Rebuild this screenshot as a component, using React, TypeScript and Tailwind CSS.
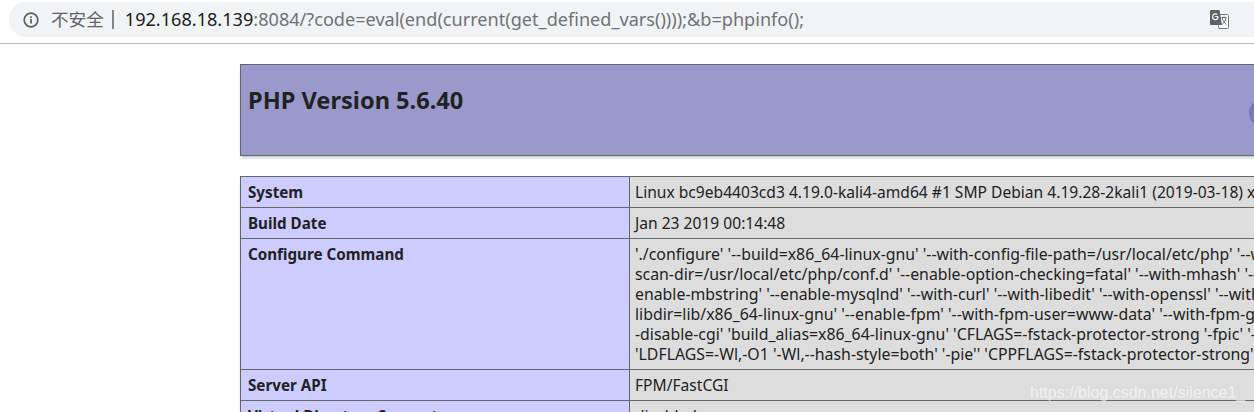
const font = "font-['Noto_Sans','Open_Sans',sans-serif]";

function Info() {
  return (
    <svg width="16" height="16" viewBox="0 0 16 16" fill="none" className="shrink-0">
      <circle cx="8" cy="8" r="6.8" stroke="#5f6368" strokeWidth="1.7" />
      <rect x="7.1" y="7.1" width="1.8" height="4.4" fill="#5f6368" />
      <rect x="7.1" y="4.300" width="1.8" height="1.8" fill="#5f6368" />
    </svg>
  );
}

function Translate() {
  return (
    <svg width="19" height="19" viewBox="0 0 19 19" className="shrink-0">
      <path d="M7 4.500h10.500a1 1 0 0 1 1 1v12a1 1 0 0 1-1 1H9l-2-14z" fill="#fff" stroke="#777" strokeWidth="1" />
      <path d="M1 0h8.500l2.500 15H1a1 1 0 0 1-1-1V1a1 1 0 0 1 1-1z" fill="#5f6368" />
      <path d="M8 6.500H5.200M8 6.500c0 2-1 3.200-2.600 3.200S2.600 8.500 2.600 6.800 3.800 3.800 5.400 3.800c.8 0 1.300.3 1.700.7" fill="none" stroke="#fff" strokeWidth="1.200" />
      <path d="M11.500 7.500h5M14 6.500v1M12.200 8c.5 2.500 2.300 5 4.300 6.500M16 8c-.5 2.500-2 5-4 6.500" fill="none" stroke="#666" strokeWidth="1" />
    </svg>
  );
}

function Row({ label, h, children }: { label: string; h: string; children: React.ReactNode }) {
  return (
    <tr className={h}>
      <td className="border border-[#666] bg-[#ccccff] px-[7px] py-[5px] align-top text-[15.2px] leading-5 font-bold text-[#222]">{label}</td>
      <td className="border border-[#666] bg-[#dddddd] px-[5px] py-[5px] align-top text-[15.6px] leading-5 whitespace-nowrap text-[#222]">{children}</td>
    </tr>
  );
}

const lines = [
  "'./configure' '--build=x86_64-linux-gnu' '--with-config-file-path=/usr/local/etc/php' '--with-config-file-",
  "scan-dir=/usr/local/etc/php/conf.d' '--enable-option-checking=fatal' '--with-mhash' '--enable-ftp' '--",
  "enable-mbstring' '--enable-mysqlnd' '--with-curl' '--with-libedit' '--with-openssl' '--with-zlib' '--with-",
  "libdir=lib/x86_64-linux-gnu' '--enable-fpm' '--with-fpm-user=www-data' '--with-fpm-group=www-data' '--",
  "-disable-cgi' 'build_alias=x86_64-linux-gnu' 'CFLAGS=-fstack-protector-strong '-fpic' '-fpie' '-O2'",
  "'LDFLAGS=-Wl,-O1 '-Wl,--hash-style=both' '-pie'' 'CPPFLAGS=-fstack-protector-strong' '-fpic'",
];

export default function App() {
  return (
    <div className={`relative h-[412px] w-[1254px] overflow-hidden bg-white ${font}`}>
      <div className="flex h-11 items-start border-b border-[#b8b8b8] bg-white pt-[2px] pl-[9px]">
        <div className="flex h-[35px] w-[1245px] items-center rounded-l-[18px] bg-[#f1f3f4] pl-[14px]">
          <Info />
          <span className="ml-[12px] font-['Noto_Sans_CJK_SC',sans-serif] text-[17.6px] text-[#5f6368]">不安全</span>
          <span className="ml-[8px] h-[19px] w-[2px] bg-[#80868b]" />
          <span className="ml-[11px] text-[18.12px] whitespace-nowrap text-[#202124]">
            192.168.18.139<span className="text-[#6f7377]">:8084/?code=eval(end(current(get_defined_vars())));&amp;b=phpinfo();</span>
          </span>
          <span className="mr-[25px] ml-auto"><Translate /></span>
        </div>
      </div>

      <div className="ml-[240px] w-[1100px] pt-5">
        <div className="flex h-[92px] items-start border border-[#666] bg-[#9999cc] pt-[19px] pl-[7px] shadow-[1px_2px_3px_#ccc]">
          <h1 className="text-[23.6px] leading-8 font-bold text-[#222]">PHP Version 5.6.40</h1>
          <span className="absolute top-[98px] left-[1249px] h-[30px] w-[30px] rounded-full bg-[#7a7ab8]" />
        </div>

        <table className="mt-5 w-full table-fixed border-collapse shadow-[1px_2px_3px_#ccc]">
          <colgroup>
            <col className="w-[389px]" />
            <col />
          </colgroup>
          <tbody>
            <Row label="System" h="h-[31px]">Linux bc9eb4403cd3 4.19.0-kali4-amd64 #1 SMP Debian 4.19.28-2kali1 (2019-03-18) x86_64</Row>
            <Row label="Build Date" h="h-[31px]">Jan 23 2019 00:14:48</Row>
            <Row label="Configure Command" h="h-[131px]">
              {lines.map((l) => (
                <div key={l} className="text-[15.85px]">{l}</div>
              ))}
            </Row>
            <Row label="Server API" h="h-[31px]">FPM/FastCGI</Row>
            <Row label="Virtual Directory Support" h="h-[31px]">disabled</Row>
          </tbody>
        </table>
      </div>

      <div className="absolute top-[383px] left-[1030px] font-['Liberation_Sans',sans-serif] text-[16px] leading-5 whitespace-nowrap text-white/60">
        https://blog.csdn.net/silence1_
      </div>
    </div>
  );
}
